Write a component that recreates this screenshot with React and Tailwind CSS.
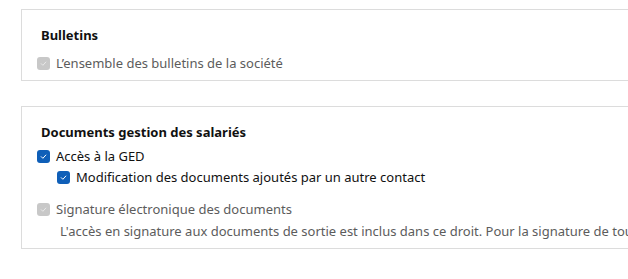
import React from "react";

function Check({ disabled }) {
  return (
    <span
      className={`inline-flex h-[13px] w-[13px] shrink-0 items-center justify-center rounded-[3px] ${
        disabled ? "bg-[#c8c8c8]" : "bg-[#0f5fb8]"
      }`}
    >
      <svg width="9" height="9" viewBox="0 0 10 10" fill="none">
        <path
          d="M2.5 5.2 L4.3 7 L7.6 3.4"
          stroke={disabled ? "#e8e8e8" : "#ffffff"}
          strokeWidth="1.1"
          strokeLinecap="round"
          strokeLinejoin="round"
        />
      </svg>
    </span>
  );
}

function Row({ children, disabled, className = "" }) {
  return (
    <div className={`flex items-center gap-[6px] h-[21px] ${className}`}>
      <Check disabled={disabled} />
      <span className={disabled ? "text-[#5c5c5c]" : "text-[#111]"}>{children}</span>
    </div>
  );
}

export default function App() {
  return (
    <div className="w-[628px] h-[279px] overflow-hidden bg-white pt-[9px] pl-[21px] text-[13px] font-['Noto_Sans',sans-serif]">
      <div className="w-[680px] border border-[#dcdcdc] pl-[15px] pt-[15px] pb-[6px]">
        <h3 className="pl-[4px] text-[13px] font-bold leading-[20px] text-[#111]">Bulletins</h3>
        <Row disabled className="mt-[8px]">
          L’ensemble des bulletins de la société
        </Row>
      </div>

      <div className="mt-[25px] w-[680px] border border-[#dcdcdc] pl-[15px] pt-[15px] pb-[5px]">
        <h3 className="pl-[4px] text-[13px] font-bold leading-[20px] text-[#111]">
          Documents gestion des salariés
        </h3>
        <Row className="mt-[4px]">Accès à la GED</Row>
        <Row className="pl-[20px]">Modification des documents ajoutés par un autre contact</Row>
        <Row disabled className="mt-[11px]">
          Signature électronique des documents
        </Row>
        <p className="pl-[23px] leading-[23px] text-[#5c5c5c] whitespace-nowrap">
          L'accès en signature aux documents de sortie est inclus dans ce droit. Pour la signature de tous les autres documents, contactez votre gestionnaire.
        </p>
      </div>
    </div>
  );
}
